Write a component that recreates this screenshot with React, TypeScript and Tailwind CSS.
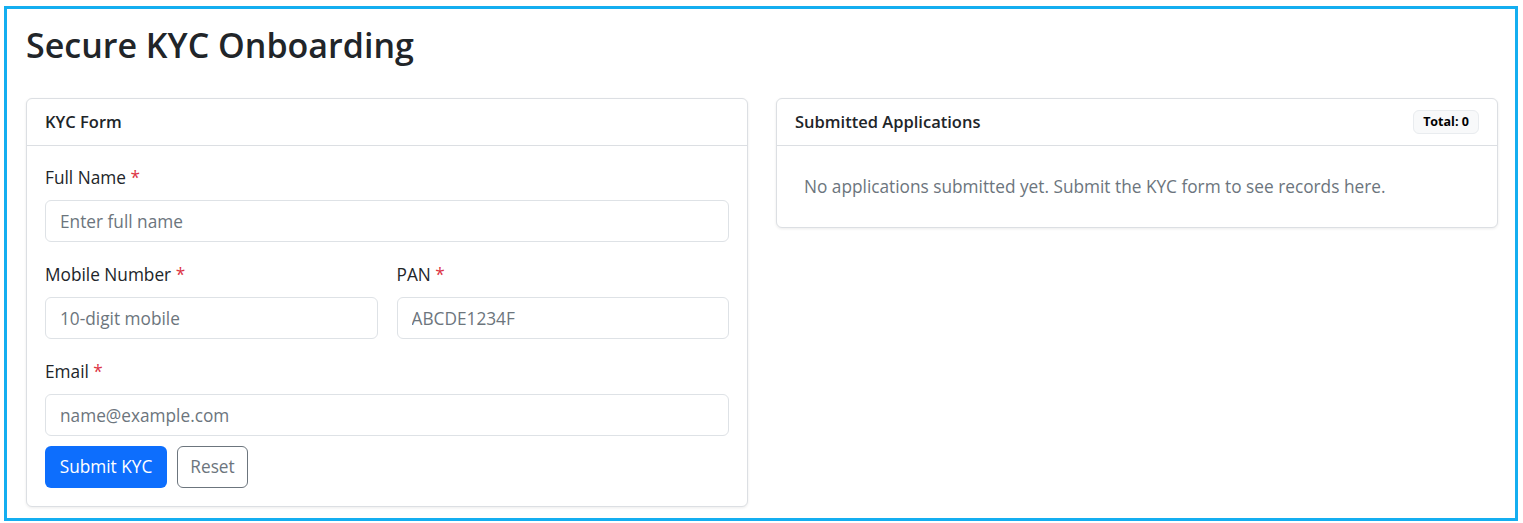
const font = { fontFamily: '"Open Sans", "Noto Sans", sans-serif' };

const Label = ({ text }: { text: string }) => (
  <label className="mb-[10px] block h-[24px] leading-[24px] text-[#212529]">
    {text} <span className="text-[#dc3545]">*</span>
  </label>
);

const Input = ({ placeholder }: { placeholder: string }) => (
  <input
    className="block h-[42px] w-full rounded-[6px] border border-[#dee2e6] bg-white px-[14px] text-[17.25px] text-[#212529] outline-none placeholder:text-[#6c757d]"
    placeholder={placeholder}
  />
);

export default function App() {
  return (
    <div className="h-[523px] w-[1523px] bg-white pl-[4px] pt-[6px] text-[17.25px]" style={font}>
      <div className="h-[515px] w-[1514px] border-[3px] border-[#14aef0] pl-[19px] pt-[15px]">
        <h1 className="mb-[32px] h-[42px] text-[34px] font-semibold leading-[42px] text-[#212529]">
          Secure KYC Onboarding
        </h1>
        <div className="grid grid-cols-[722px_722px] items-start gap-x-[28px]">
          <div className="rounded-[6px] border border-[#dcdfe3] bg-white shadow-[0_1px_3px_rgba(0,0,0,0.08)]">
            <div className="flex h-[47px] items-center border-b border-[#dcdfe3] px-[18px] text-[16.5px] font-semibold text-[#212529]">
              KYC Form
            </div>
            <form className="px-[18px] pb-[18px] pt-[20px]" onSubmit={(e) => e.preventDefault()}>
              <div className="mb-[21px]">
                <Label text="Full Name" />
                <Input placeholder="Enter full name" />
              </div>
              <div className="mb-[21px] grid grid-cols-2 gap-x-[19px]">
                <div>
                  <Label text="Mobile Number" />
                  <Input placeholder="10-digit mobile" />
                </div>
                <div>
                  <Label text="PAN" />
                  <Input placeholder="ABCDE1234F" />
                </div>
              </div>
              <div>
                <Label text="Email" />
                <Input placeholder="name@example.com" />
              </div>
              <div className="mt-[10px] flex gap-[10px]">
                <button
                  type="submit"
                  className="h-[42px] w-[122px] rounded-[6px] bg-[#0d6efd] text-[17.25px] text-white"
                >
                  Submit KYC
                </button>
                <button
                  type="reset"
                  className="h-[42px] w-[71px] rounded-[6px] border border-[#6c757d] bg-white text-[17.25px] text-[#6c757d]"
                >
                  Reset
                </button>
              </div>
            </form>
          </div>
          <div className="rounded-[6px] border border-[#dcdfe3] bg-white shadow-[0_1px_3px_rgba(0,0,0,0.08)]">
            <div className="flex h-[47px] items-center justify-between border-b border-[#dcdfe3] px-[18px]">
              <span className="text-[16.5px] font-semibold text-[#212529]">Submitted Applications</span>
              <span className="flex h-[24px] w-[66px] items-center justify-center rounded-[6px] border border-[#e9ecef] bg-[#f8f9fa] text-[12.5px] font-bold text-black">
                Total: 0
              </span>
            </div>
            <div className="px-[27px] pb-[28px] pt-[29px] leading-[24px] text-[#6c757d]">
              No applications submitted yet. Submit the KYC form to see records here.
            </div>
          </div>
        </div>
      </div>
    </div>
  );
}
